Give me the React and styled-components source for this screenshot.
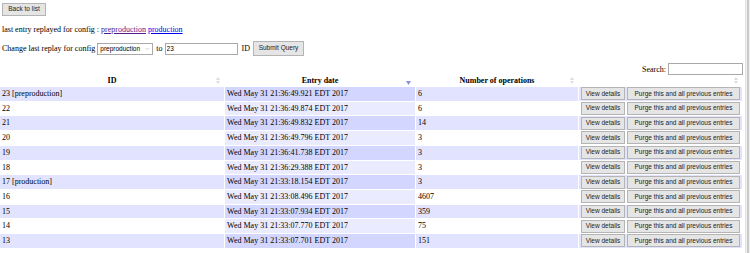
import React from 'react';
import styled, { createGlobalStyle } from 'styled-components';

const GlobalStyle = createGlobalStyle`
  html, body {
    margin: 0;
    padding: 0;
    background: #fff;
    overflow: hidden;
  }
  body {
    font-family: 'Liberation Serif', 'Times New Roman', serif;
    font-size: 8px;
    color: #000;
  }
`;

const Shell = styled.div`
  display: flex;
  width: 750px;
  height: 253px;
  overflow: hidden;
`;

const Page = styled.div`
  width: 745px;
  flex: none;
  padding-top: 3px;
`;

const Scrollbar = styled.div`
  flex: 1;
  background: #f1f1f1;
  border-left: 1px solid #e2e2e2;
  display: flex;
  justify-content: center;
`;

const ScrollThumb = styled.div`
  width: 2px;
  height: 100%;
  background: #c9c9c9;
`;

const Button = styled.button`
  font-family: 'Liberation Sans', Arial, sans-serif;
  font-size: ${(p) => p.$size || 6.5}px;
  height: ${(p) => p.$h || 13}px;
  width: ${(p) => p.$w}px;
  padding: 0;
  margin: 0;
  background: #e5e5e5;
  border: 1px solid #b4b4b4;
  border-radius: 0;
  color: #222;
  line-height: 1;
  flex: none;
`;

const Top = styled.div`
  padding-left: 2px;
`;

const Line = styled.div`
  margin-top: 8px;
  height: 12px;
  line-height: 12px;
  display: flex;
  align-items: center;
  gap: 2px;
`;

const Link = styled.a`
  color: ${(p) => (p.$visited ? '#551a8b' : '#0000ee')};
  text-decoration: underline;
`;

const FormRow = styled.div`
  margin-top: 5px;
  height: 15px;
  display: flex;
  align-items: center;
`;

const Select = styled.div`
  margin-left: 2px;
  width: 56px;
  height: 12px;
  box-sizing: border-box;
  border: 1px solid #a9a9a9;
  display: flex;
  align-items: center;
  justify-content: space-between;
  padding: 0 2px;
  font-family: 'Liberation Sans', Arial, sans-serif;
  font-size: 6.5px;
  background: #fff;
`;

const Chevron = styled.span`
  color: #777;
  font-size: 5px;
`;

const TextInput = styled.input`
  box-sizing: border-box;
  width: ${(p) => p.$w}px;
  height: 12px;
  border: 1px solid #a9a9a9;
  padding: 0 1px;
  margin: 0;
  font-family: 'Liberation Sans', Arial, sans-serif;
  font-size: 6.5px;
  outline: none;
`;

const Word = styled.span`
  margin-left: ${(p) => p.$l}px;
  margin-right: ${(p) => p.$r}px;
`;

const SearchRow = styled.div`
  margin-top: 7px;
  height: 12px;
  display: flex;
  justify-content: flex-end;
  align-items: center;
  gap: 2px;
  padding-right: 2px;
`;

const Table = styled.table`
  width: 744px;
  table-layout: fixed;
  border-collapse: separate;
  border-spacing: 1px;
  margin-top: -1px;
  margin-left: -1px;
`;

const Th = styled.th`
  position: relative;
  height: 11px;
  padding: 0;
  font-weight: bold;
  text-align: center;
  line-height: 11px;
  font-size: 8px;
`;

const SortIcon = styled.svg`
  position: absolute;
  right: 4px;
  top: ${(p) => p.$top || 2}px;
`;

const Tr = styled.tr`
  background: ${(p) => (p.$odd ? '#e2e4ff' : '#ffffff')};
`;

const Td = styled.td`
  height: 13.7px;
  padding: 0 2px;
  line-height: 13.7px;
  white-space: nowrap;
  overflow: hidden;
  background: ${(p) => (p.$sorted ? (p.$odd ? '#d3d6ff' : '#eaebff') : 'transparent')};
`;

const Actions = styled.div`
  display: flex;
  gap: 2px;
  align-items: center;
`;

const Both = () => (
  <SortIcon width="4" height="7" viewBox="0 0 4 7">
    <path d="M2 0 L4 3 L0 3 Z" fill="#dcdcdc" />
    <path d="M0 4 L4 4 L2 7 Z" fill="#dcdcdc" />
  </SortIcon>
);

const Desc = () => (
  <SortIcon width="5" height="4" viewBox="0 0 5 4" $top={6}>
    <path d="M0 0 L5 0 L2.5 4 Z" fill="#8a90e0" />
  </SortIcon>
);

const rows = [
  ['23 [preproduction]', 'Wed May 31 21:36:49.921 EDT 2017', '6'],
  ['22', 'Wed May 31 21:36:49.874 EDT 2017', '6'],
  ['21', 'Wed May 31 21:36:49.832 EDT 2017', '14'],
  ['20', 'Wed May 31 21:36:49.796 EDT 2017', '3'],
  ['19', 'Wed May 31 21:36:41.738 EDT 2017', '3'],
  ['18', 'Wed May 31 21:36:29.388 EDT 2017', '3'],
  ['17 [production]', 'Wed May 31 21:33:18.154 EDT 2017', '3'],
  ['16', 'Wed May 31 21:33:08.496 EDT 2017', '4607'],
  ['15', 'Wed May 31 21:33:07.934 EDT 2017', '359'],
  ['14', 'Wed May 31 21:33:07.770 EDT 2017', '75'],
  ['13', 'Wed May 31 21:33:07.701 EDT 2017', '151'],
];

export default function App() {
  return (
    <>
      <GlobalStyle />
      <Shell>
        <Page>
          <Top>
            <Button $w={44} $size={6.5}>Back to list</Button>
            <Line>
              <span>last entry replayed for config :</span>
              <Link href="#" $visited>preproduction</Link>
              <Link href="#">production</Link>
            </Line>
            <FormRow>
              <span>Change last replay for config</span>
              <Select>
                <span>preproduction</span>
                <Chevron>﹀</Chevron>
              </Select>
              <Word $l={3} $r={2}>to</Word>
              <TextInput $w={73} defaultValue="23" />
              <Word $l={4} $r={3}>ID</Word>
              <Button $w={51} $h={15} $size={6.5}>Submit Query</Button>
            </FormRow>
          </Top>
          <SearchRow>
            <span>Search:</span>
            <TextInput $w={75} />
          </SearchRow>
          <Table>
            <colgroup>
              <col style={{ width: 224 }} />
              <col style={{ width: 190 }} />
              <col style={{ width: 162 }} />
              <col />
            </colgroup>
            <thead>
              <tr>
                <Th>ID<Both /></Th>
                <Th>Entry date<Desc /></Th>
                <Th>Number of operations<Both /></Th>
                <Th><Both /></Th>
              </tr>
            </thead>
            <tbody>
              {rows.map((r, i) => {
                const odd = i % 2 === 0;
                return (
                  <Tr key={r[0]} $odd={odd}>
                    <Td>{r[0]}</Td>
                    <Td $sorted $odd={odd}>{r[1]}</Td>
                    <Td>{r[2]}</Td>
                    <Td>
                      <Actions>
                        <Button $w={44}>View details</Button>
                        <Button $w={113}>Purge this and all previous entries</Button>
                      </Actions>
                    </Td>
                  </Tr>
                );
              })}
            </tbody>
          </Table>
        </Page>
        <Scrollbar>
          <ScrollThumb />
        </Scrollbar>
      </Shell>
    </>
  );
}
